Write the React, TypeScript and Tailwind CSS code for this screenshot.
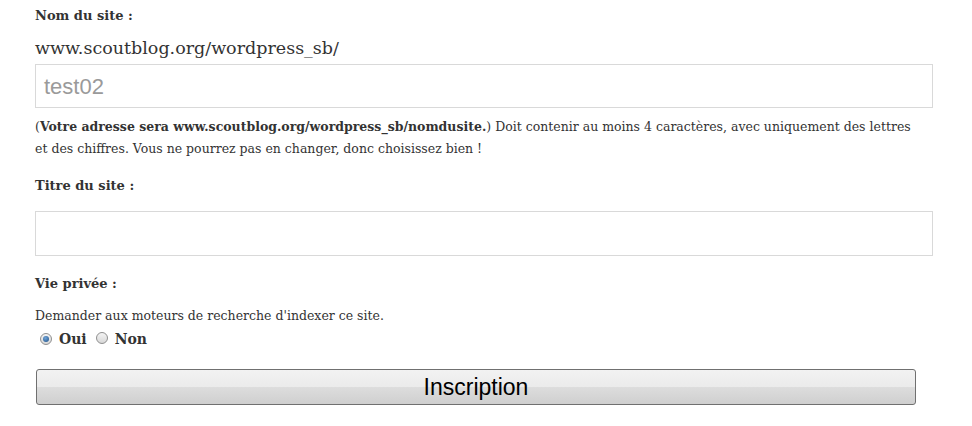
import React from "react";

const serif = { fontFamily: '"DejaVu Serif", "Liberation Serif", serif' };
const sans = { fontFamily: '"Liberation Sans", Arial, sans-serif' };

function Radio({ checked }: { checked?: boolean }) {
  return (
    <span className="inline-flex h-[12px] w-[12px] items-center justify-center rounded-full border border-[#8f8f8f] bg-gradient-to-b from-[#f4f4f4] to-[#d8d8d8]">
      {checked && <span className="h-[6px] w-[6px] rounded-full bg-[radial-gradient(circle_at_40%_35%,#6fa4d8,#1f4f86)]" />}
    </span>
  );
}

export default function App() {
  return (
    <div className="min-h-[426px] w-[972px] bg-white text-[#333]" style={serif}>
      <div className="pl-[35px] pr-[39px] pt-[7px]">
        <div className="text-[13px] font-bold leading-[18px]">Nom du site :</div>
        <div className="mt-[11px] text-[17.5px] leading-[24px]">www.scoutblog.org/wordpress_sb/</div>
        <div className="mt-[4px] flex h-[44px] items-center border border-[#d9d9d9] px-[8px] text-[22px] text-[#9a9a9a]" style={sans}>
          test02
        </div>
        <p className="mt-[8px] text-[12.5px] leading-[22px]">
          (<b>Votre adresse sera www.scoutblog.org/wordpress_sb/nomdusite.</b>) Doit contenir au moins 4 caractères, avec uniquement des lettres
          <br />
          et des chiffres. Vous ne pourrez pas en changer, donc choisissez bien !
        </p>
        <div className="mt-[17px] text-[13px] font-bold leading-[18px]">Titre du site :</div>
        <div className="mt-[16px] h-[45px] border border-[#d9d9d9]" />
        <div className="mt-[19px] text-[13px] font-bold leading-[18px]">Vie privée :</div>
        <div className="mt-[14px] text-[12.5px] leading-[18px]">Demander aux moteurs de recherche d'indexer ce site.</div>
        <div className="mt-[5px] flex items-center pl-[5px] text-[14px] font-bold leading-[18px]">
          <Radio checked />
          <span className="ml-[7px]">Oui</span>
          <span className="ml-[9px]"><Radio /></span>
          <span className="ml-[7px]">Non</span>
        </div>
        <button
          className="ml-[1px] mt-[21px] flex h-[36px] w-[880px] items-center justify-center rounded-[3px] border border-[#707070] bg-[linear-gradient(to_bottom,#f2f2f2_0%,#ebebeb_50%,#dddddd_50%,#cfcfcf_100%)] text-[23px] text-black"
          style={sans}
        >
          Inscription
        </button>
      </div>
    </div>
  );
}
